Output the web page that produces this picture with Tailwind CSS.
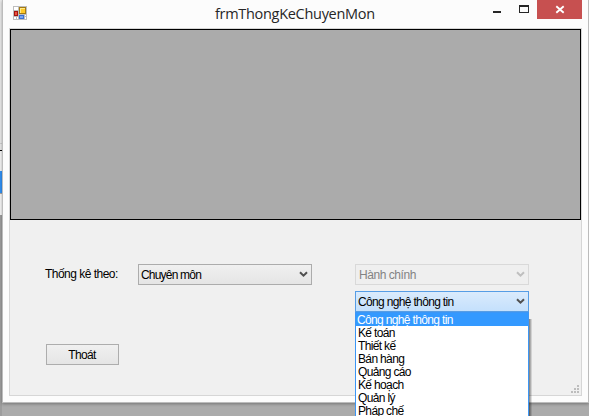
<!DOCTYPE html>
<html lang="vi">
<head>
<meta charset="utf-8">
<title>frmThongKeChuyenMon</title>
<script src="https://cdn.jsdelivr.net/npm/@tailwindcss/browser@4"></script>
</head>
<body class="relative w-[589px] h-[416px] overflow-hidden bg-[#ababab] font-['Liberation_Sans',Arial,sans-serif] text-[12px] leading-[13px] text-black whitespace-nowrap">
<div class="flex h-[416px]">
  <!-- background window edge -->
  <div class="w-[2px] shrink-0 flex flex-col">
    <div class="h-[143px] bg-[#e9e9e9]"></div>
    <div class="h-px bg-[#cfcfcf]"></div>
    <div class="h-[6px] bg-[#e9e9e9]"></div>
    <div class="h-px bg-black"></div>
    <div class="h-[20px] bg-[#f4f4f4]"></div>
    <div class="h-[22px] bg-[#3191f5]"></div>
    <div class="h-px bg-[#a5a5a5]"></div>
    <div class="h-[21px] bg-[#f6f6f6]"></div>
    <div class="grow bg-[#9d9d9d]"></div>
  </div>
  <main class="w-[587px] h-[403px] shrink-0 flex flex-col bg-[#fcfcfc] border border-t-0 border-[#bcbcbc] shadow-[0_1px_3px_#00000050]">
    <header class="h-[28px] shrink-0 flex items-start">
      <svg class="ml-[10px] mt-[6px] shrink-0" width="14" height="14" viewBox="0 0 14 14" shape-rendering="crispEdges">
        <path fill="#bdbdbd" d="M0 0h14v14H0z"/>
        <path fill="#fff" d="M1 1h4v3H1zM1 11h2v2H1zM4 11h1v2H4zM12 9h1v1h-1zM12 11h1v2h-1z"/>
        <path fill="#a37a12" d="M6 1h7v7H6z"/><path fill="#ffe98c" d="M7 2h5v5H7z"/><path fill="#ffc927" d="M8 3h4v4H8z"/>
        <path fill="#a5140e" d="M1 5h4v5H1z"/><path fill="#e9513f" d="M2 6h2v3H2z"/>
        <path fill="#3a6fd0" d="M6 9h5v4H6z"/><path fill="#76a5f4" d="M7 10h3v2H7z"/>
      </svg>
      <h1 class="ml-[188px] w-[162px] mt-[4px] font-['Open_Sans',sans-serif] text-[14.5px] leading-[20px] text-[#262626] tracking-[-0.3px]">frmThongKeChuyenMon</h1>
      <svg class="ml-[115px] shrink-0" width="45" height="19" viewBox="0 0 45 19" shape-rendering="crispEdges"><path fill="#262626" d="M1 11h8v2H1z"/><path fill="#262626" fill-rule="evenodd" d="M27 5h10v8H27zM28 7v5h8V7z"/></svg>
      <div class="w-[45px] h-[19px] bg-[#c75050] shrink-0"><svg width="45" height="19" viewBox="0 0 45 19"><path d="M19.3 6.3l7.4 6.4M26.7 6.3l-7.4 6.4" stroke="#fff" stroke-width="1.9"/></svg></div>
    </header>
    <section class="ml-[6px] w-[573px] h-[368px] border border-[#d6d6d6] bg-[#f0f0f0] flex flex-col">
      <div class="h-[191px] shrink-0 bg-[#ababab] border border-black"></div>
      <div class="flex pt-[44px]">
        <div class="w-[128px] shrink-0">
          <div class="pl-[35px] pt-[4px] h-[80px]"><span class="tracking-[-0.52px]">Thống kê theo:</span></div>
          <button class="ml-[36px] w-[73px] h-[21px] pt-px pr-px border border-[#adadad] bg-linear-to-b from-[#f0f0f0] to-[#e5e5e5] text-[12px] leading-[13px] tracking-[-0.6px]">Thoát</button>
        </div>
        <div class="w-[174px] h-[21px] border border-[#acacac] bg-linear-to-b from-[#f0f0f0] to-[#e5e5e5] flex items-center justify-between pl-[2px] pr-[3px]">
          <span class="pt-px tracking-[-0.8px]">Chuyên môn</span>
          <svg width="9" height="7" viewBox="0 0 9 7"><path d="M1 1.2L4.5 4.7 8 1.2" fill="none" stroke="#505050" stroke-width="2"/></svg>
        </div>
        <div class="ml-[43px] w-[174px]">
          <div class="h-[21px] border border-[#d9d9d9] bg-[#efefef] flex items-center justify-between pl-[3px] pr-[3px] text-[#838383]">
            <span class="pt-px tracking-[-0.45px]">Hành chính</span>
            <svg width="9" height="7" viewBox="0 0 9 7"><path d="M1 1.2L4.5 4.7 8 1.2" fill="none" stroke="#bfbfbf" stroke-width="2"/></svg>
          </div>
          <div class="mt-[6px] h-[21px] border border-[#569de5] bg-linear-to-b from-[#daebfc] to-[#c4e0fc] flex items-center justify-between pl-[2px] pr-[3px]">
            <span class="pt-px tracking-[-0.66px]">Công nghệ thông tin</span>
            <svg width="9" height="7" viewBox="0 0 9 7"><path d="M1 1.2L4.5 4.7 8 1.2" fill="none" stroke="#505050" stroke-width="2"/></svg>
          </div>
        </div>
      </div>
    </section>
  </main>
</div>
<!-- resize grip -->
<svg class="absolute left-[571px] top-[385px]" width="8" height="8" shape-rendering="crispEdges"><path fill="#bdbdbd" d="M6 0h2v2H6zM3 3h2v2H3zM6 3h2v2H6zM0 6h2v2H0zM3 6h2v2H3zM6 6h2v2H6z"/></svg>
<!-- open dropdown list -->
<div class="absolute left-[529px] top-[319px] w-[3px] h-[97px] bg-linear-to-r from-black/50 to-black/5"></div>
<ul class="absolute left-[355px] top-[312px] w-[174px] h-[110px] border border-[#3c96f5] bg-white tracking-[-0.65px] *:h-[13px] *:pl-[2px] *:leading-[15px]">
  <li class="bg-[#3399ff] text-white -indent-px">Công nghệ thông tin</li>
  <li>Kế toán</li>
  <li>Thiết kế</li>
  <li>Bán hàng</li>
  <li>Quảng cáo</li>
  <li>Kế hoạch</li>
  <li>Quản lý</li>
  <li>Pháp chế</li>
</ul>
</body>
</html>
